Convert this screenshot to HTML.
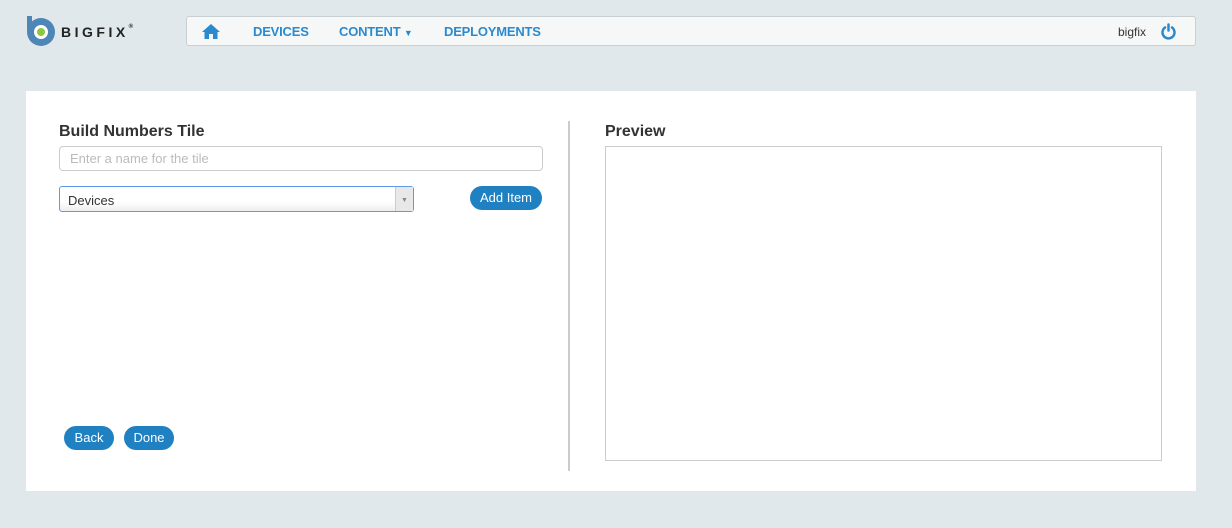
<!DOCTYPE html>
<html><head><style>
body{margin:0;width:1232px;height:528px;background:#e1e8eb;font-family:"Liberation Sans",Arial,sans-serif;position:relative;overflow:hidden}
.abs{position:absolute}
.nav{left:186px;top:16px;width:1008px;height:28px;background:#f6f8f8;border:1px solid #c8d0d4;border-radius:3px}
.nav a{position:absolute;top:7px;color:#2a8ad0;font-size:13px;text-decoration:none;line-height:16px;font-weight:bold;letter-spacing:-0.2px}
.panel{left:26px;top:91px;width:1170px;height:400px;background:#fff}
.btn{position:absolute;background:#1f80c2;color:#fff;font-size:13px;border-radius:12px;height:24px;line-height:24px;text-align:center}
</style></head><body>
<svg class="abs" style="left:25px;top:14px" width="32" height="34" viewBox="0 0 32 34">
<circle cx="16" cy="18" r="14" fill="#4d86b7"/><circle cx="16" cy="18" r="7" fill="#fff"/><circle cx="16" cy="18" r="4" fill="#8dc63f"/><rect x="2" y="2" width="5" height="14" fill="#4d86b7"/>
</svg>
<div class="abs" style="left:61px;top:24px;font-weight:bold;font-size:14px;letter-spacing:3.5px;color:#222">BIGFIX<span style="font-size:6px;vertical-align:top">®</span></div>
<div class="abs nav">
<svg style="position:absolute;left:15px;top:7px" width="18" height="15" viewBox="0 0 18 15"><path d="M9 0L0 8h2.5v7h4.5V10h4v5h4.5V8H18z" fill="#2a8ad0"/></svg>
<a style="left:66px">DEVICES</a>
<a style="left:152px">CONTENT <span style="font-size:9px">▼</span></a>
<a style="left:257px">DEPLOYMENTS</a>
<span style="position:absolute;left:931px;top:8px;font-size:12px;color:#333">bigfix</span>
<svg style="position:absolute;left:973px;top:6px" width="17" height="17" viewBox="0 0 17 17"><path d="M5 4.5A6 6 0 1 0 12 4.5" fill="none" stroke="#2a8ad0" stroke-width="2.5" stroke-linecap="round"/><path d="M8.5 1.5v6" stroke="#2a8ad0" stroke-width="2.5" stroke-linecap="round"/></svg>
</div>
<div class="abs panel">
<div class="abs" style="left:33px;top:32px;font-weight:bold;font-size:16px;color:#333">Build Numbers Tile</div>
<div class="abs" style="left:33px;top:55px;height:23px;border:1px solid #ccc;border-radius:4px;color:#bbb;font-size:13px;line-height:23px;padding-left:10px;width:472px">Enter a name for the tile</div>
<div class="abs" style="left:33px;top:95px;height:24px;border:1px solid #5b9be8;border-radius:3px;background:linear-gradient(#fff 60%,#eee);font-size:13px;line-height:27px;padding-left:8px;width:345px;color:#333">Devices
<div style="position:absolute;right:0;top:0;width:17px;height:24px;background:#e8e8e8;border-left:1px solid #ccc;font-size:7px;line-height:28px;color:#888;text-align:center">▼</div></div>
<div class="btn" style="left:444px;top:95px;width:72px">Add Item</div>
<div class="btn" style="left:38px;top:335px;width:50px">Back</div>
<div class="btn" style="left:98px;top:335px;width:50px">Done</div>
<div class="abs" style="left:542px;top:30px;width:2px;height:350px;background:#ccc"></div>
<div class="abs" style="left:579px;top:32px;font-weight:bold;font-size:16px;color:#333">Preview</div>
<div class="abs" style="left:579px;top:55px;width:555px;height:313px;border:1px solid #ccc"></div>
</div>
</body></html>
